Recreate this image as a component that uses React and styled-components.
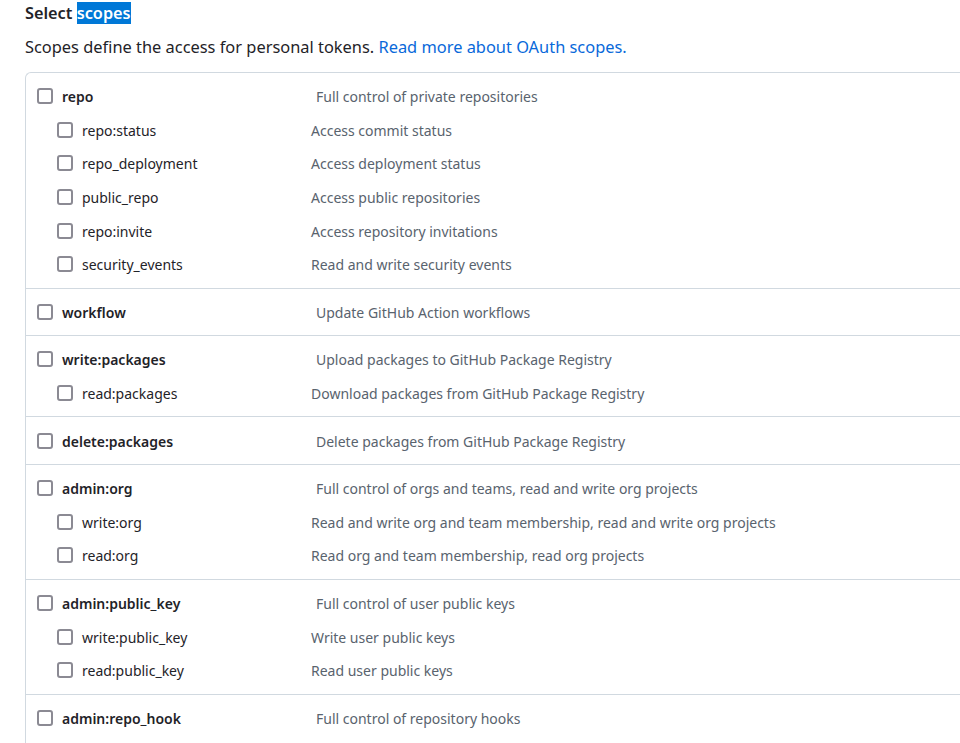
import React from "react";
import styled, {createGlobalStyle} from "styled-components";

const GlobalStyle = createGlobalStyle`
  html, body {
    margin: 0;
    overflow: hidden;
    background: #ffffff;
  }
  body {
    font-family: "Noto Sans", "Open Sans", sans-serif;
    color: #1f2328;
  }
`;

const Page = styled.div`
  padding: 3px 0 0 25px;
  width: 1000px;
`;
const Heading = styled.h3`
  margin: 0;
  font-size: 16.3px;
  line-height: 21px;
  font-weight: 600;
`;
const Selected = styled.span`
  background: #0078d7;
  color: #ffffff;
`;
const Note = styled.p`
  margin: 11px 0 0;
  font-size: 16.4px;
  line-height: 24px;
`;
const Link = styled.a`
  color: #0969da;
  text-decoration: none;
`;
const ScopeBox = styled.div`
  margin-top: 13px;
  border: 1px solid #d1d9e0;
  border-right: none;
  border-radius: 6px 0 0 6px;
`;
const Group = styled.div`
  padding: 6.5px 0;
  border-top: 1px solid #d1d9e0;

  &:first-child {
    border-top: none;
  }
`;
const Row = styled.label`
  display: flex;
  align-items: center;
  height: 33.6px;
  padding-left: ${(p) => (p.$child ? 31 : 11)}px;
  padding-top: 1px;
  box-sizing: border-box;
  font-size: 14px;
`;
const Box = styled.span`
  flex: none;
  width: 12px;
  height: 12px;
  margin-top: -1px;
  border: 2px solid #8b8a93;
  border-radius: 3px;
  margin-right: 9px;
`;
const Name = styled.span`
  flex: none;
  width: ${(p) => (p.$child ? 229 : 254)}px;
  font-weight: ${(p) => (p.$child ? 400 : 600)};
  color: #1f2328;
`;
const Desc = styled.span`
  color: #59636e;
`;

const groups = [
  [
    ["repo", "Full control of private repositories"],
    ["repo:status", "Access commit status"],
    ["repo_deployment", "Access deployment status"],
    ["public_repo", "Access public repositories"],
    ["repo:invite", "Access repository invitations"],
    ["security_events", "Read and write security events"],
  ],
  [["workflow", "Update GitHub Action workflows"]],
  [
    ["write:packages", "Upload packages to GitHub Package Registry"],
    ["read:packages", "Download packages from GitHub Package Registry"],
  ],
  [["delete:packages", "Delete packages from GitHub Package Registry"]],
  [
    ["admin:org", "Full control of orgs and teams, read and write org projects"],
    ["write:org", "Read and write org and team membership, read and write org projects"],
    ["read:org", "Read org and team membership, read org projects"],
  ],
  [
    ["admin:public_key", "Full control of user public keys"],
    ["write:public_key", "Write user public keys"],
    ["read:public_key", "Read user public keys"],
  ],
  [
    ["admin:repo_hook", "Full control of repository hooks"],
    ["write:repo_hook", "Write repository hooks"],
    ["read:repo_hook", "Read repository hooks"],
  ],
];

export default function App() {
  return (
    <>
      <GlobalStyle/>
      <Page>
        <Heading>Select <Selected>scopes</Selected></Heading>
        <Note>
          Scopes define the access for personal tokens.{" "}
          <Link href="#">Read more about OAuth scopes.</Link>
        </Note>
        <ScopeBox>
          {groups.map((rows) => (
            <Group key={rows[0][0]}>
              {rows.map(([name, desc], i) => (
                <Row key={name} $child={i > 0}>
                  <Box/>
                  <Name $child={i > 0}>{name}</Name>
                  <Desc>{desc}</Desc>
                </Row>
              ))}
            </Group>
          ))}
        </ScopeBox>
      </Page>
    </>
  );
}
